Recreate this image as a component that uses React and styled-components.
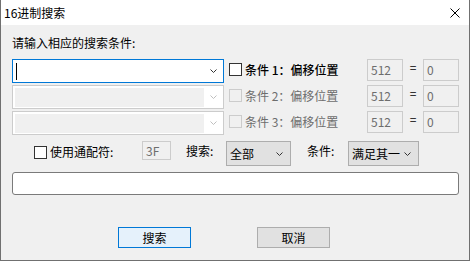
import React from 'react';
import styled, { createGlobalStyle } from 'styled-components';

const GlobalStyle = createGlobalStyle`
  html, body {
    margin: 0;
    padding: 0;
    background: #ffffff;
  }
  body {
    font-family: "Noto Sans CJK SC", "Noto Sans", sans-serif;
    font-size: 12px;
    color: #000;
  }
  * {
    box-sizing: border-box;
  }
`;

const Dialog = styled.div`
  width: 470px;
  height: 261px;
  border: 1px solid #707070;
  border-top: none;
  background: #f0f0f0;
  display: flex;
  flex-direction: column;
`;

const TitleBar = styled.div`
  height: 25px;
  flex: 0 0 25px;
  background: #ffffff;
  display: flex;
  align-items: center;
  justify-content: space-between;
  padding: 0 9px 0 3px;
`;

const Title = styled.span`
  line-height: 16px;
`;

const Body = styled.div`
  display: flex;
  flex-direction: column;
  padding: 10px 10px 0 11px;
`;

const Prompt = styled.div`
  height: 16px;
  line-height: 16px;
  margin-bottom: 8px;
`;

const CondList = styled.div`
  display: flex;
  flex-direction: column;
  gap: 2px;
`;

const CondRow = styled.div`
  display: flex;
  align-items: flex-start;
  height: 24px;
`;

const Combo = styled.div`
  width: 212px;
  height: 24px;
  display: flex;
  border: 1px solid ${p => (p.$active ? '#0078d7' : '#cccccc')};
  background: #ffffff;
`;

const ComboEdit = styled.div`
  flex: 1;
  display: flex;
  align-items: center;
  margin: ${p => (p.$active ? '0 0 0 3px' : '2px 0 1px 2px')};
  background: ${p => (p.$active ? '#ffffff' : '#f0f0f0')};
`;

const Caret = styled.span`
  width: 1px;
  height: 17px;
  background: #000;
`;

const ComboArrow = styled.div`
  width: 19px;
  display: flex;
  align-items: center;
  justify-content: center;
`;

const Check = styled.span`
  width: 13px;
  height: 13px;
  flex: 0 0 13px;
  border: 1px solid ${p => (p.$disabled ? '#cccccc' : '#333333')};
  background: ${p => (p.$disabled ? 'transparent' : '#ffffff')};
  margin: ${p => p.$margin || '4px 3px 0 5px'};
`;

const CondLabel = styled.span`
  width: 122px;
  line-height: 22px;
  white-space: pre;
  color: ${p => (p.$disabled ? '#6d6d6d' : '#000000')};
  font-weight: ${p => (p.$disabled ? 400 : 500)};
`;

const TextBox = styled.div`
  width: ${p => p.$width || 36}px;
  height: ${p => p.$height || 22}px;
  border: 1px solid #cccccc;
  background: #f0f0f0;
  color: #6d6d6d;
  padding-left: 3px;
  line-height: ${p => (p.$height || 22) - 2}px;
`;

const Eq = styled.span`
  width: 20px;
  text-align: center;
  line-height: 16px;
`;

const OptRow = styled.div`
  display: flex;
  align-items: flex-start;
  height: 25px;
  margin-top: 6px;
`;

const OptLabel = styled.span`
  width: ${p => p.$width}px;
  margin-left: ${p => p.$gap || 0}px;
  margin-top: ${p => p.$top || 0}px;
  line-height: ${p => p.$line || 19}px;
  white-space: pre;
`;

const Select = styled.div`
  width: ${p => p.$width}px;
  height: 25px;
  border: 1px solid #adadad;
  background: #e1e1e1;
  display: flex;
  align-items: center;
  justify-content: space-between;
  padding: 0 7px 0 3px;
  line-height: 23px;
`;

const Field = styled.div`
  height: 23px;
  margin-top: 6px;
  border: 1px solid #7a7a7a;
  border-radius: 3px;
  background: #ffffff;
`;

const Buttons = styled.div`
  display: flex;
  gap: 66px;
  margin-top: 32px;
  padding-left: 106px;
`;

const Button = styled.div`
  width: 73px;
  height: 21px;
  border: 1px solid ${p => (p.$primary ? '#0078d7' : '#adadad')};
  background: ${p => (p.$primary ? '#e5f1fb' : '#e1e1e1')};
  text-align: center;
  line-height: 19px;
`;

const Chevron = ({ color = '#333' }) => (
  <svg width="7" height="4" viewBox="0 0 7 4">
    <polyline points="0.5,0.5 3.5,3.5 6.5,0.5" fill="none" stroke={color} strokeWidth="1" />
  </svg>
);

const CloseIcon = () => (
  <svg width="10" height="10" viewBox="0 0 10 10">
    <path d="M0.5 0.5 L9.5 9.5 M9.5 0.5 L0.5 9.5" stroke="#000" strokeWidth="1" />
  </svg>
);

const conditions = [
  { n: 1, disabled: false },
  { n: 2, disabled: true },
  { n: 3, disabled: true },
];

export default function App() {
  return (
    <>
      <GlobalStyle />
      <Dialog>
        <TitleBar>
          <Title>16进制搜索</Title>
          <CloseIcon />
        </TitleBar>
        <Body>
          <Prompt>请输入相应的搜索条件:</Prompt>
          <CondList>
            {conditions.map(c => (
              <CondRow key={c.n}>
                <Combo $active={!c.disabled}>
                  <ComboEdit $active={!c.disabled}>{!c.disabled && <Caret />}</ComboEdit>
                  <ComboArrow>
                    <Chevron color={c.disabled ? '#bfbfbf' : '#333'} />
                  </ComboArrow>
                </Combo>
                <Check $disabled={c.disabled} />
                <CondLabel $disabled={c.disabled}>{`条件 ${c.n}：偏移位置`}</CondLabel>
                <TextBox>512</TextBox>
                <Eq>=</Eq>
                <TextBox>0</TextBox>
              </CondRow>
            ))}
          </CondList>
          <OptRow>
            <Check $margin="5px 3px 0 22px" />
            <OptLabel $width={92} $top={3} $line={16}>使用通配符:</OptLabel>
            <TextBox $width={29} $height={19}>3F</TextBox>
            <OptLabel $width={40} $gap={15}>搜索:</OptLabel>
            <Select $width={65}>
              <span>全部</span>
              <Chevron />
            </Select>
            <OptLabel $width={41} $gap={16}>条件:</OptLabel>
            <Select $width={71}>
              <span>满足其一</span>
              <Chevron />
            </Select>
          </OptRow>
          <Field />
          <Buttons>
            <Button $primary>搜索</Button>
            <Button>取消</Button>
          </Buttons>
        </Body>
      </Dialog>
    </>
  );
}
